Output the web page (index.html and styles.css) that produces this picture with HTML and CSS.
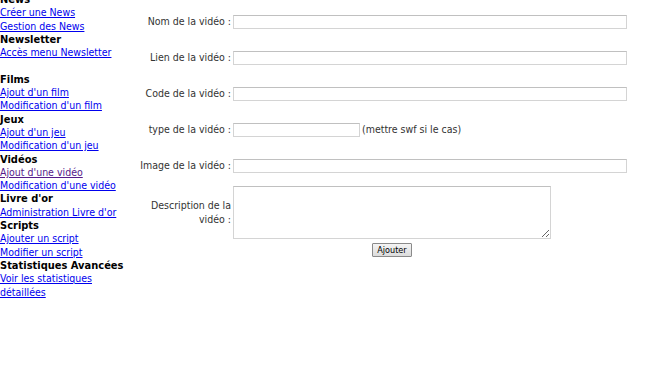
FILE: index.html
```html
<!DOCTYPE html>
<html lang="fr">
<head>
    <meta charset="UTF-8">
    <title>Administration - Vidéos</title>
    <link rel="stylesheet" href="styles.css">
</head>
<body>
    <div class="page">
        <div class="menu">
            <h4>News</h4>
            <a href="#">Créer une News</a>
            <a href="#">Gestion des News</a>
            <h4>Newsletter</h4>
            <a href="#">Accès menu Newsletter</a>
            <br>
            <h4>Films</h4>
            <a href="#">Ajout d'un film</a>
            <a href="#">Modification d'un film</a>
            <h4>Jeux</h4>
            <a href="#">Ajout d'un jeu</a>
            <a href="#">Modification d'un jeu</a>
            <h4>Vidéos</h4>
            <a href="#" class="visited">Ajout d'une vidéo</a>
            <a href="#">Modification d'une vidéo</a>
            <h4>Livre d'or</h4>
            <a href="#">Administration Livre d'or</a>
            <h4>Scripts</h4>
            <a href="#">Ajouter un script</a>
            <a href="#">Modifier un script</a>
            <h4>Statistiques Avancées</h4>
            <a href="#">Voir les statistiques détaillées</a>
        </div>

        <form class="video-form">
            <div class="row">
                <label>Nom de la vidéo :</label>
                <input type="text" class="field">
            </div>
            <div class="row">
                <label>Lien de la vidéo :</label>
                <input type="text" class="field">
            </div>
            <div class="row">
                <label>Code de la vidéo :</label>
                <input type="text" class="field">
            </div>
            <div class="row">
                <label>type de la vidéo :</label>
                <div class="inline">
                    <input type="text" class="field short">
                    <span>(mettre swf si le cas)</span>
                </div>
            </div>
            <div class="row">
                <label>Image de la vidéo :</label>
                <input type="text" class="field">
            </div>
            <div class="row row-desc">
                <label>Description de la vidéo :</label>
                <textarea class="desc"></textarea>
            </div>
            <div class="actions">
                <button type="button" class="submit-btn">Ajouter</button>
            </div>
        </form>
    </div>
</body>
</html>
```

FILE: styles.css
```css
* {
    box-sizing: border-box;
}

body {
    margin: 0;
    background: #fff;
    font-family: Tahoma, 'DejaVu Sans Condensed', 'DejaVu Sans', sans-serif;
    font-size: 10.5px;
    line-height: 13.3px;
    color: #000;
}

.page {
    display: flex;
    align-items: flex-start;
}

.menu {
    width: 128px;
    margin-top: -7px;
    flex-shrink: 0;
}

.menu h4 {
    margin: 0;
    font-size: 11px;
    font-weight: bold;
}

.menu a {
    display: block;
    color: #0000ee;
    text-decoration: underline;
}

.menu a.visited {
    color: #551a8b;
}

.video-form {
    padding-left: 11px;
    padding-top: 15px;
    color: #333;
}

.row {
    display: flex;
    align-items: center;
    margin-bottom: 22px;
}

.row label {
    width: 92px;
    text-align: right;
    margin-right: 2px;
}

.field {
    width: 394px;
    height: 14px;
    padding: 0 2px;
    border: 1px solid #d4d4d4;
    border-top-color: #c0c0c0;
    font-size: 11px;
    font-family: inherit;
}

.field.short {
    width: 127px;
}

.inline {
    display: flex;
    align-items: center;
}

.inline span {
    margin-left: 2px;
}

.row-desc {
    margin-top: -9px;
    margin-bottom: 4px;
}

.row-desc label {
    padding-left: 5px;
}

.desc {
    width: 318px;
    height: 53px;
    border: 1px solid #d4d4d4;
    border-top-color: #c0c0c0;
    resize: both;
    font-family: inherit;
}

.actions {
    margin-left: 94px;
    width: 318px;
    text-align: center;
}

.submit-btn {
    width: 40px;
    height: 14px;
    padding: 0;
    font-family: inherit;
    font-size: 9px;
    line-height: 12px;
    color: #000;
    background: linear-gradient(#f4f4f4, #dcdcdc);
    border: 1px solid #8a8a8a;
    border-radius: 1px;
}
```
